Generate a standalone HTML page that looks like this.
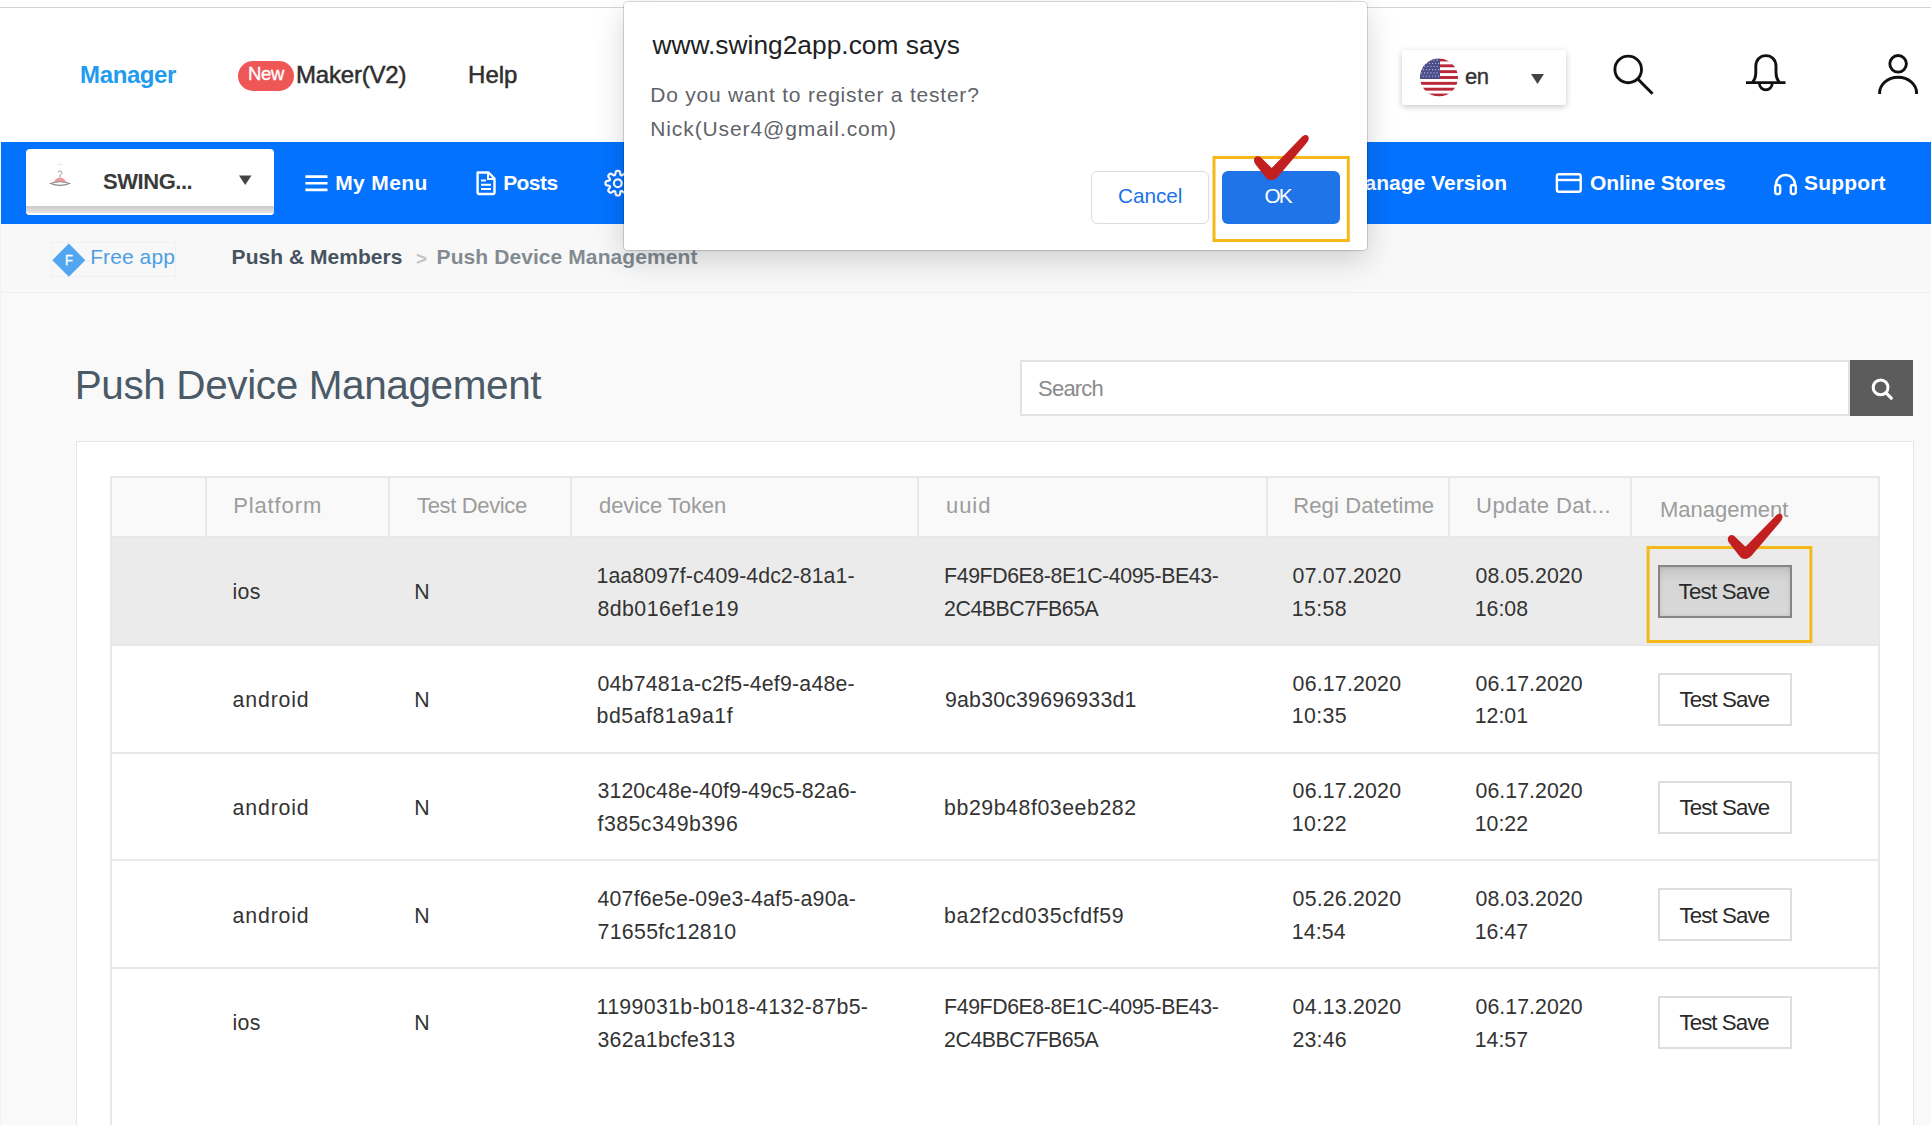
<!DOCTYPE html>
<html><head><meta charset="utf-8"><style>
html,body{margin:0;padding:0;width:1931px;height:1125px;overflow:hidden;background:#fff;position:relative}
.t{position:absolute;white-space:nowrap;line-height:1;font-family:"Liberation Sans",sans-serif}
.ov{position:absolute;left:0;top:0}
</style></head><body>
<div style="position:absolute;left:0px;top:7px;width:1931px;height:1px;background:#d4d4d4"></div>
<div style="position:absolute;left:0px;top:224px;width:1px;height:901px;background:#f3f3f3"></div>
<div class="t" id="t0" style="left:80.10px;top:62.50px;font-size:24px;font-weight:700;color:#1f9bf0;letter-spacing:-0.400px;">Manager</div>
<div style="position:absolute;left:238px;top:61px;width:56px;height:30px;background:#ef5757;border-radius:15px"></div>
<div class="t" id="t1" style="left:248.05px;top:65.05px;font-size:18.5px;font-weight:400;color:#fff;letter-spacing:-0.300px;-webkit-text-stroke:0.35px #fff">New</div>
<div class="t" id="t2" style="left:296.00px;top:62.50px;font-size:24px;font-weight:400;color:#2e2e2e;letter-spacing:-0.200px;-webkit-text-stroke:0.5px #2e2e2e">Maker(V2)</div>
<div class="t" id="t3" style="left:468.10px;top:62.50px;font-size:24px;font-weight:400;color:#2e2e2e;-webkit-text-stroke:0.5px #2e2e2e">Help</div>
<div style="position:absolute;left:1402px;top:50px;width:164px;height:55px;background:#fff;border-radius:3px;box-shadow:0 2px 6px rgba(0,0,0,0.22)"></div>
<div class="t" id="t4" style="left:1465.10px;top:65.50px;font-size:22px;font-weight:400;color:#333;letter-spacing:-0.500px;-webkit-text-stroke:0.4px #333">en</div>
<div style="position:absolute;left:1px;top:142px;width:1930px;height:82px;background:#0372fe"></div>
<div style="position:absolute;left:26px;top:149px;width:248px;height:66px;background:#fff;border-radius:4px;overflow:hidden"></div>
<div style="position:absolute;left:26px;top:206px;width:248px;height:9px;background:linear-gradient(#cbcbcb,#e4e4e4 78%,#fff 79%);border-radius:0 0 4px 4px"></div>
<div class="t" id="t5" style="left:103.10px;top:170.50px;font-size:22px;font-weight:700;color:#3a3a3a;letter-spacing:-0.472px;">SWING...</div>
<div class="t" id="t6" style="left:335.20px;top:172.00px;font-size:21px;font-weight:700;color:#fff;letter-spacing:0.375px;">My Menu</div>
<div class="t" id="t7" style="left:503.20px;top:172.00px;font-size:21px;font-weight:700;color:#fff;letter-spacing:-0.575px;">Posts</div>
<div class="t" id="t8" style="left:1307.00px;top:172.00px;font-size:21px;font-weight:700;color:#fff;width:200px;text-align:right">Manage Version</div>
<div class="t" id="t9" style="left:1590.10px;top:172.00px;font-size:21px;font-weight:700;color:#fff;letter-spacing:-0.075px;">Online Stores</div>
<div class="t" id="t10" style="left:1804.10px;top:172.00px;font-size:21px;font-weight:700;color:#fff;letter-spacing:0.150px;">Support</div>
<div style="position:absolute;left:1px;top:224px;width:1930px;height:68px;background:#f8f8f8;border-bottom:1px solid #f0f0f0"></div>
<div style="position:absolute;left:51px;top:241.5px;width:125px;height:35.5px;border:1px solid #f1f1f1;box-sizing:border-box"></div>
<div class="t" id="t11" style="left:90.15px;top:245.70px;font-size:21px;font-weight:400;color:#4d9fe2;letter-spacing:0.093px;">Free app</div>
<div class="t" id="t12" style="left:231.60px;top:246.20px;font-size:21px;font-weight:700;color:#46535f;letter-spacing:0.039px;">Push &amp; Members</div>
<div class="t" id="t13" style="left:416.00px;top:248.50px;font-size:19px;font-weight:700;color:#c2c2c2;letter-spacing:5.850px;">&gt;</div>
<div class="t" id="t14" style="left:436.55px;top:246.20px;font-size:21px;font-weight:700;color:#838b91;letter-spacing:0.085px;">Push Device Management</div>
<div style="position:absolute;left:1px;top:293px;width:1930px;height:832px;background:#f9f9f9"></div>
<div class="t" id="t15" style="left:74.75px;top:364.75px;font-size:40.5px;font-weight:400;color:#4b5a67;letter-spacing:-0.392px;">Push Device Management</div>
<div style="position:absolute;left:1020px;top:359.5px;width:830px;height:56px;background:#fff;border:2px solid #dfe3e6;box-sizing:border-box"></div>
<div class="t" id="t16" style="left:1038.10px;top:377.50px;font-size:22px;font-weight:400;color:#8a8a8a;letter-spacing:-0.800px;">Search</div>
<div style="position:absolute;left:1850px;top:359.5px;width:63px;height:56px;background:#5c5c5c"></div>
<div style="position:absolute;left:76px;top:441px;width:1838px;height:700px;background:#fff;border:1px solid #e6e6e6;box-sizing:border-box"></div>
<div style="position:absolute;left:110px;top:475.5px;width:1770px;height:700px;border:2px solid #e8e8e8;box-sizing:border-box;background:#fff"></div>
<div style="position:absolute;left:112px;top:477.5px;width:1766px;height:59.5px;background:#f9f9f9"></div>
<div style="position:absolute;left:112px;top:536px;width:1766px;height:2px;background:#e8e8e8"></div>
<div style="position:absolute;left:204.5px;top:477.5px;width:2px;height:59px;background:#e9e9e9"></div>
<div style="position:absolute;left:387.5px;top:477.5px;width:2px;height:59px;background:#e9e9e9"></div>
<div style="position:absolute;left:569.5px;top:477.5px;width:2px;height:59px;background:#e9e9e9"></div>
<div style="position:absolute;left:917px;top:477.5px;width:2px;height:59px;background:#e9e9e9"></div>
<div style="position:absolute;left:1265.5px;top:477.5px;width:2px;height:59px;background:#e9e9e9"></div>
<div style="position:absolute;left:1447.5px;top:477.5px;width:2px;height:59px;background:#e9e9e9"></div>
<div style="position:absolute;left:1629.5px;top:477.5px;width:2px;height:59px;background:#e9e9e9"></div>
<div class="t" id="t17" style="left:233.20px;top:495.00px;font-size:22px;font-weight:400;color:#9c9c9c;letter-spacing:0.879px;">Platform</div>
<div class="t" id="t18" style="left:417.00px;top:495.00px;font-size:22px;font-weight:400;color:#9c9c9c;letter-spacing:-0.350px;">Test Device</div>
<div class="t" id="t19" style="left:599.05px;top:495.00px;font-size:22px;font-weight:400;color:#9c9c9c;letter-spacing:-0.076px;">device Token</div>
<div class="t" id="t20" style="left:946.10px;top:495.00px;font-size:22px;font-weight:400;color:#9c9c9c;letter-spacing:0.900px;">uuid</div>
<div class="t" id="t21" style="left:1293.20px;top:495.00px;font-size:22px;font-weight:400;color:#9c9c9c;letter-spacing:0.125px;">Regi Datetime</div>
<div class="t" id="t22" style="left:1476.10px;top:495.00px;font-size:22px;font-weight:400;color:#9c9c9c;letter-spacing:0.400px;">Update Dat...</div>
<div class="t" id="t23" style="left:1660.00px;top:498.80px;font-size:22px;font-weight:400;color:#9c9c9c;">Management</div>
<div style="position:absolute;left:112px;top:538px;width:1766px;height:107px;background:#ebebeb"></div>
<div style="position:absolute;left:112px;top:644px;width:1766px;height:2px;background:#e8e8e8"></div>
<div class="t" id="t24" style="left:232.55px;top:582.35px;font-size:21.3px;font-weight:400;color:#333;letter-spacing:0.325px;">ios</div>
<div class="t" id="t25" style="left:414.15px;top:582.35px;font-size:21.3px;font-weight:400;color:#333;letter-spacing:9.000px;">N</div>
<div class="t" id="t26" style="left:596.60px;top:565.85px;font-size:21.3px;font-weight:400;color:#333;letter-spacing:0.041px;">1aa8097f-c409-4dc2-81a1-</div>
<div class="t" id="t27" style="left:597.50px;top:598.65px;font-size:21.3px;font-weight:400;color:#333;letter-spacing:0.439px;">8db016ef1e19</div>
<div class="t" id="t28" style="left:944.10px;top:565.85px;font-size:21.3px;font-weight:400;color:#333;letter-spacing:-0.411px;">F49FD6E8-8E1C-4095-BE43-</div>
<div class="t" id="t29" style="left:944.10px;top:598.65px;font-size:21.3px;font-weight:400;color:#333;letter-spacing:-0.471px;">2C4BBC7FB65A</div>
<div class="t" id="t30" style="left:1292.60px;top:565.85px;font-size:21.3px;font-weight:400;color:#333;letter-spacing:0.200px;">07.07.2020</div>
<div class="t" id="t31" style="left:1291.70px;top:598.65px;font-size:21.3px;font-weight:400;color:#333;letter-spacing:0.375px;">15:58</div>
<div class="t" id="t32" style="left:1475.55px;top:565.85px;font-size:21.3px;font-weight:400;color:#333;letter-spacing:0.050px;">08.05.2020</div>
<div class="t" id="t33" style="left:1474.65px;top:598.65px;font-size:21.3px;font-weight:400;color:#333;letter-spacing:0.038px;">16:08</div>
<div style="position:absolute;left:1658px;top:565.0px;width:134px;height:53px;background:linear-gradient(#c6c6c6,#d6d6d6 30%,#d8d8d8);border:2px solid #858585;box-sizing:border-box;box-shadow:inset 0 0 4px rgba(0,0,0,0.12)"></div>
<div class="t" id="t34" style="left:1678.60px;top:581.35px;font-size:22.3px;font-weight:400;color:#2a2a2a;letter-spacing:-0.798px;">Test Save</div>
<div style="position:absolute;left:112px;top:752px;width:1766px;height:2px;background:#e8e8e8"></div>
<div class="t" id="t35" style="left:232.55px;top:690.10px;font-size:21.3px;font-weight:400;color:#333;letter-spacing:0.850px;">android</div>
<div class="t" id="t36" style="left:414.15px;top:690.10px;font-size:21.3px;font-weight:400;color:#333;letter-spacing:8.100px;">N</div>
<div class="t" id="t37" style="left:597.50px;top:673.60px;font-size:21.3px;font-weight:400;color:#333;letter-spacing:0.216px;">04b7481a-c2f5-4ef9-a48e-</div>
<div class="t" id="t38" style="left:596.60px;top:706.40px;font-size:21.3px;font-weight:400;color:#333;letter-spacing:0.521px;">bd5af81a9a1f</div>
<div class="t" id="t39" style="left:945.00px;top:690.10px;font-size:21.3px;font-weight:400;color:#333;letter-spacing:0.200px;">9ab30c39696933d1</div>
<div class="t" id="t40" style="left:1292.60px;top:673.60px;font-size:21.3px;font-weight:400;color:#333;letter-spacing:0.200px;">06.17.2020</div>
<div class="t" id="t41" style="left:1291.70px;top:706.40px;font-size:21.3px;font-weight:400;color:#333;letter-spacing:0.375px;">10:35</div>
<div class="t" id="t42" style="left:1475.55px;top:673.60px;font-size:21.3px;font-weight:400;color:#333;letter-spacing:0.050px;">06.17.2020</div>
<div class="t" id="t43" style="left:1474.65px;top:706.40px;font-size:21.3px;font-weight:400;color:#333;letter-spacing:0.038px;">12:01</div>
<div style="position:absolute;left:1658px;top:672.75px;width:134px;height:53px;background:#fff;border:2px solid #dedede;box-sizing:border-box"></div>
<div class="t" id="t44" style="left:1679.50px;top:689.10px;font-size:22.3px;font-weight:400;color:#2a2a2a;letter-spacing:-0.911px;">Test Save</div>
<div style="position:absolute;left:112px;top:859px;width:1766px;height:2px;background:#e8e8e8"></div>
<div class="t" id="t45" style="left:232.55px;top:797.85px;font-size:21.3px;font-weight:400;color:#333;letter-spacing:0.850px;">android</div>
<div class="t" id="t46" style="left:414.15px;top:797.85px;font-size:21.3px;font-weight:400;color:#333;letter-spacing:8.100px;">N</div>
<div class="t" id="t47" style="left:597.50px;top:781.35px;font-size:21.3px;font-weight:400;color:#333;letter-spacing:0.099px;">3120c48e-40f9-49c5-82a6-</div>
<div class="t" id="t48" style="left:597.50px;top:814.15px;font-size:21.3px;font-weight:400;color:#333;letter-spacing:0.480px;">f385c349b396</div>
<div class="t" id="t49" style="left:944.10px;top:797.85px;font-size:21.3px;font-weight:400;color:#333;letter-spacing:0.560px;">bb29b48f03eeb282</div>
<div class="t" id="t50" style="left:1292.60px;top:781.35px;font-size:21.3px;font-weight:400;color:#333;letter-spacing:0.200px;">06.17.2020</div>
<div class="t" id="t51" style="left:1291.70px;top:814.15px;font-size:21.3px;font-weight:400;color:#333;letter-spacing:0.375px;">10:22</div>
<div class="t" id="t52" style="left:1475.55px;top:781.35px;font-size:21.3px;font-weight:400;color:#333;letter-spacing:0.050px;">06.17.2020</div>
<div class="t" id="t53" style="left:1474.65px;top:814.15px;font-size:21.3px;font-weight:400;color:#333;letter-spacing:0.038px;">10:22</div>
<div style="position:absolute;left:1658px;top:780.5px;width:134px;height:53px;background:#fff;border:2px solid #dedede;box-sizing:border-box"></div>
<div class="t" id="t54" style="left:1679.50px;top:796.85px;font-size:22.3px;font-weight:400;color:#2a2a2a;letter-spacing:-0.911px;">Test Save</div>
<div style="position:absolute;left:112px;top:967px;width:1766px;height:2px;background:#e8e8e8"></div>
<div class="t" id="t55" style="left:232.55px;top:905.60px;font-size:21.3px;font-weight:400;color:#333;letter-spacing:0.850px;">android</div>
<div class="t" id="t56" style="left:414.15px;top:905.60px;font-size:21.3px;font-weight:400;color:#333;letter-spacing:8.100px;">N</div>
<div class="t" id="t57" style="left:597.50px;top:889.10px;font-size:21.3px;font-weight:400;color:#333;letter-spacing:0.216px;">407f6e5e-09e3-4af5-a90a-</div>
<div class="t" id="t58" style="left:597.50px;top:921.90px;font-size:21.3px;font-weight:400;color:#333;letter-spacing:0.318px;">71655fc12810</div>
<div class="t" id="t59" style="left:944.10px;top:905.60px;font-size:21.3px;font-weight:400;color:#333;letter-spacing:0.680px;">ba2f2cd035cfdf59</div>
<div class="t" id="t60" style="left:1292.60px;top:889.10px;font-size:21.3px;font-weight:400;color:#333;letter-spacing:0.200px;">05.26.2020</div>
<div class="t" id="t61" style="left:1291.70px;top:921.90px;font-size:21.3px;font-weight:400;color:#333;letter-spacing:0.150px;">14:54</div>
<div class="t" id="t62" style="left:1475.55px;top:889.10px;font-size:21.3px;font-weight:400;color:#333;letter-spacing:0.050px;">08.03.2020</div>
<div class="t" id="t63" style="left:1474.65px;top:921.90px;font-size:21.3px;font-weight:400;color:#333;letter-spacing:0.038px;">16:47</div>
<div style="position:absolute;left:1658px;top:888.25px;width:134px;height:53px;background:#fff;border:2px solid #dedede;box-sizing:border-box"></div>
<div class="t" id="t64" style="left:1679.50px;top:904.60px;font-size:22.3px;font-weight:400;color:#2a2a2a;letter-spacing:-0.911px;">Test Save</div>
<div class="t" id="t65" style="left:232.55px;top:1013.35px;font-size:21.3px;font-weight:400;color:#333;letter-spacing:0.325px;">ios</div>
<div class="t" id="t66" style="left:414.15px;top:1013.35px;font-size:21.3px;font-weight:400;color:#333;letter-spacing:8.100px;">N</div>
<div class="t" id="t67" style="left:596.60px;top:996.85px;font-size:21.3px;font-weight:400;color:#333;letter-spacing:0.332px;">1199031b-b018-4132-87b5-</div>
<div class="t" id="t68" style="left:597.50px;top:1029.65px;font-size:21.3px;font-weight:400;color:#333;letter-spacing:0.237px;">362a1bcfe313</div>
<div class="t" id="t69" style="left:944.10px;top:996.85px;font-size:21.3px;font-weight:400;color:#333;letter-spacing:-0.411px;">F49FD6E8-8E1C-4095-BE43-</div>
<div class="t" id="t70" style="left:944.10px;top:1029.65px;font-size:21.3px;font-weight:400;color:#333;letter-spacing:-0.471px;">2C4BBC7FB65A</div>
<div class="t" id="t71" style="left:1292.60px;top:996.85px;font-size:21.3px;font-weight:400;color:#333;letter-spacing:0.200px;">04.13.2020</div>
<div class="t" id="t72" style="left:1292.60px;top:1029.65px;font-size:21.3px;font-weight:400;color:#333;letter-spacing:0.150px;">23:46</div>
<div class="t" id="t73" style="left:1475.55px;top:996.85px;font-size:21.3px;font-weight:400;color:#333;letter-spacing:0.050px;">06.17.2020</div>
<div class="t" id="t74" style="left:1474.65px;top:1029.65px;font-size:21.3px;font-weight:400;color:#333;letter-spacing:0.038px;">14:57</div>
<div style="position:absolute;left:1658px;top:996.0px;width:134px;height:53px;background:#fff;border:2px solid #dedede;box-sizing:border-box"></div>
<div class="t" id="t75" style="left:1679.50px;top:1012.35px;font-size:22.3px;font-weight:400;color:#2a2a2a;letter-spacing:-0.956px;">Test Save</div>
<svg class="ov" width="1931" height="1125" viewBox="0 0 1931 1125">
<clipPath id="fc"><circle cx="1439" cy="77.5" r="19"/></clipPath><g clip-path="url(#fc)"><rect x="1420" y="58.5" width="38" height="38" fill="#fff"/><rect x="1420" y="58.50" width="38" height="2.92" fill="#b8283a"/><rect x="1420" y="64.35" width="38" height="2.92" fill="#b8283a"/><rect x="1420" y="70.19" width="38" height="2.92" fill="#b8283a"/><rect x="1420" y="76.04" width="38" height="2.92" fill="#b8283a"/><rect x="1420" y="81.88" width="38" height="2.92" fill="#b8283a"/><rect x="1420" y="87.73" width="38" height="2.92" fill="#b8283a"/><rect x="1420" y="93.58" width="38" height="2.92" fill="#b8283a"/><rect x="1420" y="58.5" width="20" height="20.46" fill="#4a4f8c"/><circle cx="1421.60" cy="60.10" r="0.6" fill="#c9cbe0"/><circle cx="1424.70" cy="60.10" r="0.6" fill="#c9cbe0"/><circle cx="1427.80" cy="60.10" r="0.6" fill="#c9cbe0"/><circle cx="1430.90" cy="60.10" r="0.6" fill="#c9cbe0"/><circle cx="1434.00" cy="60.10" r="0.6" fill="#c9cbe0"/><circle cx="1437.10" cy="60.10" r="0.6" fill="#c9cbe0"/><circle cx="1423.15" cy="63.30" r="0.6" fill="#c9cbe0"/><circle cx="1426.25" cy="63.30" r="0.6" fill="#c9cbe0"/><circle cx="1429.35" cy="63.30" r="0.6" fill="#c9cbe0"/><circle cx="1432.45" cy="63.30" r="0.6" fill="#c9cbe0"/><circle cx="1435.55" cy="63.30" r="0.6" fill="#c9cbe0"/><circle cx="1438.65" cy="63.30" r="0.6" fill="#c9cbe0"/><circle cx="1421.60" cy="66.50" r="0.6" fill="#c9cbe0"/><circle cx="1424.70" cy="66.50" r="0.6" fill="#c9cbe0"/><circle cx="1427.80" cy="66.50" r="0.6" fill="#c9cbe0"/><circle cx="1430.90" cy="66.50" r="0.6" fill="#c9cbe0"/><circle cx="1434.00" cy="66.50" r="0.6" fill="#c9cbe0"/><circle cx="1437.10" cy="66.50" r="0.6" fill="#c9cbe0"/><circle cx="1423.15" cy="69.70" r="0.6" fill="#c9cbe0"/><circle cx="1426.25" cy="69.70" r="0.6" fill="#c9cbe0"/><circle cx="1429.35" cy="69.70" r="0.6" fill="#c9cbe0"/><circle cx="1432.45" cy="69.70" r="0.6" fill="#c9cbe0"/><circle cx="1435.55" cy="69.70" r="0.6" fill="#c9cbe0"/><circle cx="1438.65" cy="69.70" r="0.6" fill="#c9cbe0"/><circle cx="1421.60" cy="72.90" r="0.6" fill="#c9cbe0"/><circle cx="1424.70" cy="72.90" r="0.6" fill="#c9cbe0"/><circle cx="1427.80" cy="72.90" r="0.6" fill="#c9cbe0"/><circle cx="1430.90" cy="72.90" r="0.6" fill="#c9cbe0"/><circle cx="1434.00" cy="72.90" r="0.6" fill="#c9cbe0"/><circle cx="1437.10" cy="72.90" r="0.6" fill="#c9cbe0"/><circle cx="1423.15" cy="76.10" r="0.6" fill="#c9cbe0"/><circle cx="1426.25" cy="76.10" r="0.6" fill="#c9cbe0"/><circle cx="1429.35" cy="76.10" r="0.6" fill="#c9cbe0"/><circle cx="1432.45" cy="76.10" r="0.6" fill="#c9cbe0"/><circle cx="1435.55" cy="76.10" r="0.6" fill="#c9cbe0"/><circle cx="1438.65" cy="76.10" r="0.6" fill="#c9cbe0"/></g>
<path d="M1531,74 L1544,74 L1537.5,84 Z" fill="#444"/>
<!-- search -->
<circle cx="1628.2" cy="69.4" r="13.3" fill="none" stroke="#111" stroke-width="2.9"/>
<path d="M1637.8,79 L1652.5,93.7" stroke="#111" stroke-width="3"/>
<!-- bell -->
<path d="M1752.3,82.3 C1754.8,79.8 1755.8,77 1755.8,72.5 L1755.8,66.5 C1755.8,59.8 1760.2,55.6 1765.9,55.6 C1771.6,55.6 1776,59.8 1776,66.5 L1776,72.5 C1776,77 1777,79.8 1779.5,82.3" fill="none" stroke="#111" stroke-width="2.9"/>
<path d="M1746,82.6 L1785.5,82.6" stroke="#111" stroke-width="2.9"/>
<path d="M1759.4,83.5 A6.4,6.4 0 0 0 1772.2,83.5" fill="none" stroke="#111" stroke-width="2.8"/>
<!-- user -->
<circle cx="1898.1" cy="63.8" r="8.3" fill="none" stroke="#111" stroke-width="2.9"/>
<path d="M1879.6,94 L1879.6,93 A18.5,15.8 0 0 1 1916.6,93 L1916.6,94" fill="none" stroke="#111" stroke-width="2.9"/>
<!-- app select -->
<path d="M239,175.5 L251.5,175.5 L245.2,185 Z" fill="#444"/>
<path d="M57.5,164.3 H62" stroke="#ddd" stroke-width="0.8"/>
<path d="M60,177.2 V175.6 C60,174.6 62,174.2 62,172.9 C62,171.7 61.1,171 60,171 C58.9,171 58.1,171.7 58.1,172.6" fill="none" stroke="#888" stroke-width="0.9"/>
<path d="M53.8,182 C55.5,178.5 58,177.4 60,177.4 C62,177.4 64.5,178.5 66.4,182 Z" fill="#e99b9b"/>
<path d="M50.5,183.6 Q60,179.8 69.6,183.6 Q60,187.2 50.5,183.6 Z" fill="none" stroke="#8a8a8a" stroke-width="1.1"/>
<!-- hamburger -->
<g stroke="#fff" stroke-width="2.6">
<path d="M305.4,176.6 H327.5 M305.4,183.2 H327.5 M305.4,189.9 H327.5"/>
</g>
<!-- doc -->
<path d="M477.6,172.5 H488.5 L494.5,178.5 V192.8 Q494.5,194 493.3,194 H478.8 Q477.6,194 477.6,192.8 Z" fill="none" stroke="#fff" stroke-width="2.4" stroke-linejoin="round"/>
<path d="M488,172.8 V179 H494.2" fill="none" stroke="#fff" stroke-width="2"/>
<path d="M481,180.5 H486 M481,184.8 H491 M481,189 H491" stroke="#fff" stroke-width="2"/>
<!-- gear -->
<path d="M625.72,186.48 L625.70,186.51 L625.69,186.55 L625.68,186.59 L625.67,186.62 L625.66,186.66 L625.65,186.70 L625.64,186.73 L625.64,186.77 L625.63,186.81 L625.63,186.85 L625.63,186.89 L625.62,186.93 L625.63,186.97 L625.63,187.02 L625.63,187.06 L625.64,187.11 L625.65,187.16 L625.66,187.20 L625.67,187.25 L625.69,187.31 L625.71,187.36 L625.73,187.42 L625.76,187.47 L625.78,187.54 L625.82,187.60 L625.85,187.66 L625.89,187.73 L625.94,187.80 L625.99,187.88 L626.04,187.96 L626.09,188.04 L626.15,188.12 L626.21,188.21 L626.28,188.29 L626.35,188.39 L626.42,188.48 L626.49,188.58 L626.56,188.67 L626.63,188.77 L626.70,188.87 L626.77,188.97 L626.84,189.07 L626.90,189.17 L626.96,189.26 L627.02,189.36 L627.07,189.45 L627.12,189.55 L627.17,189.64 L627.21,189.72 L627.24,189.81 L627.27,189.89 L627.29,189.97 L627.31,190.05 L627.33,190.12 L627.34,190.20 L627.35,190.27 L627.35,190.33 L627.35,190.40 L627.35,190.46 L627.34,190.52 L627.33,190.58 L627.32,190.64 L627.31,190.70 L627.29,190.75 L627.27,190.80 L627.26,190.86 L627.23,190.91 L627.21,190.96 L627.19,191.01 L627.16,191.05 L627.13,191.10 L627.11,191.15 L627.08,191.19 L627.05,191.24 L627.02,191.28 L626.99,191.33 L626.96,191.37 L626.92,191.41 L626.89,191.46 L626.86,191.50 L626.82,191.54 L626.79,191.58 L626.75,191.62 L626.72,191.66 L626.68,191.70 L626.65,191.74 L626.61,191.78 L626.57,191.82 L626.54,191.86 L626.50,191.90 L626.46,191.94 L626.42,191.97 L626.38,192.01 L626.34,192.05 L626.30,192.08 L626.26,192.12 L626.22,192.15 L626.18,192.19 L626.14,192.22 L626.10,192.26 L626.06,192.29 L626.01,192.32 L625.97,192.36 L625.93,192.39 L625.88,192.42 L625.84,192.45 L625.79,192.48 L625.75,192.51 L625.70,192.53 L625.65,192.56 L625.61,192.59 L625.56,192.61 L625.51,192.63 L625.46,192.66 L625.40,192.67 L625.35,192.69 L625.30,192.71 L625.24,192.72 L625.18,192.73 L625.12,192.74 L625.06,192.75 L625.00,192.75 L624.93,192.75 L624.87,192.75 L624.80,192.74 L624.72,192.73 L624.65,192.71 L624.57,192.69 L624.49,192.67 L624.41,192.64 L624.32,192.61 L624.24,192.57 L624.15,192.52 L624.05,192.47 L623.96,192.42 L623.86,192.36 L623.77,192.30 L623.67,192.24 L623.57,192.17 L623.47,192.10 L623.37,192.03 L623.27,191.96 L623.18,191.89 L623.08,191.82 L622.99,191.75 L622.89,191.68 L622.81,191.61 L622.72,191.55 L622.64,191.49 L622.56,191.44 L622.48,191.39 L622.40,191.34 L622.33,191.29 L622.26,191.25 L622.20,191.22 L622.14,191.18 L622.07,191.16 L622.02,191.13 L621.96,191.11 L621.91,191.09 L621.85,191.07 L621.80,191.06 L621.76,191.05 L621.71,191.04 L621.66,191.03 L621.62,191.03 L621.57,191.03 L621.53,191.02 L621.49,191.03 L621.45,191.03 L621.41,191.03 L621.37,191.04 L621.33,191.04 L621.30,191.05 L621.26,191.06 L621.22,191.07 L621.19,191.08 L621.15,191.09 L621.11,191.10 L621.08,191.12 L621.05,191.13 L621.01,191.15 L620.98,191.17 L620.94,191.18 L620.91,191.20 L620.88,191.22 L620.85,191.24 L620.82,191.27 L620.78,191.29 L620.75,191.32 L620.72,191.34 L620.69,191.37 L620.66,191.40 L620.64,191.43 L620.61,191.47 L620.58,191.51 L620.55,191.55 L620.53,191.59 L620.50,191.63 L620.47,191.68 L620.45,191.73 L620.43,191.79 L620.40,191.85 L620.38,191.91 L620.36,191.98 L620.34,192.05 L620.32,192.13 L620.30,192.21 L620.28,192.30 L620.26,192.39 L620.24,192.48 L620.23,192.58 L620.21,192.69 L620.19,192.80 L620.18,192.91 L620.16,193.03 L620.14,193.14 L620.12,193.26 L620.10,193.38 L620.08,193.50 L620.06,193.62 L620.04,193.74 L620.02,193.85 L619.99,193.97 L619.96,194.08 L619.93,194.18 L619.90,194.28 L619.87,194.37 L619.84,194.46 L619.80,194.55 L619.76,194.63 L619.72,194.70 L619.68,194.77 L619.64,194.84 L619.60,194.89 L619.56,194.95 L619.51,195.00 L619.46,195.05 L619.42,195.09 L619.37,195.13 L619.32,195.16 L619.27,195.19 L619.22,195.22 L619.17,195.25 L619.12,195.28 L619.07,195.30 L619.02,195.32 L618.97,195.34 L618.92,195.36 L618.87,195.37 L618.81,195.39 L618.76,195.40 L618.71,195.41 L618.65,195.42 L618.60,195.43 L618.55,195.44 L618.50,195.45 L618.44,195.46 L618.39,195.47 L618.34,195.47 L618.28,195.48 L618.23,195.48 L618.18,195.49 L618.12,195.49 L618.07,195.49 L618.01,195.50 L617.96,195.50 L617.91,195.50 L617.85,195.50 L617.80,195.50 L617.75,195.50 L617.69,195.50 L617.64,195.50 L617.59,195.50 L617.53,195.49 L617.48,195.49 L617.42,195.49 L617.37,195.48 L617.32,195.48 L617.26,195.47 L617.21,195.47 L617.16,195.46 L617.10,195.45 L617.05,195.44 L617.00,195.43 L616.95,195.42 L616.89,195.41 L616.84,195.40 L616.79,195.39 L616.73,195.37 L616.68,195.36 L616.63,195.34 L616.58,195.32 L616.53,195.30 L616.48,195.28 L616.43,195.25 L616.38,195.22 L616.33,195.19 L616.28,195.16 L616.23,195.13 L616.18,195.09 L616.14,195.05 L616.09,195.00 L616.04,194.95 L616.00,194.89 L615.96,194.84 L615.92,194.77 L615.88,194.70 L615.84,194.63 L615.80,194.55 L615.76,194.46 L615.73,194.37 L615.70,194.28 L615.67,194.18 L615.64,194.08 L615.61,193.97 L615.58,193.85 L615.56,193.74 L615.54,193.62 L615.52,193.50 L615.50,193.38 L615.48,193.26 L615.46,193.14 L615.44,193.03 L615.42,192.91 L615.41,192.80 L615.39,192.69 L615.37,192.58 L615.36,192.48 L615.34,192.39 L615.32,192.30 L615.30,192.21 L615.28,192.13 L615.26,192.05 L615.24,191.98 L615.22,191.91 L615.20,191.85 L615.17,191.79 L615.15,191.73 L615.13,191.68 L615.10,191.63 L615.07,191.59 L615.05,191.55 L615.02,191.51 L614.99,191.47 L614.96,191.43 L614.94,191.40 L614.91,191.37 L614.88,191.34 L614.85,191.32 L614.82,191.29 L614.78,191.27 L614.75,191.24 L614.72,191.22 L614.69,191.20 L614.66,191.18 L614.62,191.17 L614.59,191.15 L614.55,191.13 L614.52,191.12 L614.49,191.10 L614.45,191.09 L614.41,191.08 L614.38,191.07 L614.34,191.06 L614.30,191.05 L614.27,191.04 L614.23,191.04 L614.19,191.03 L614.15,191.03 L614.11,191.03 L614.07,191.02 L614.03,191.03 L613.98,191.03 L613.94,191.03 L613.89,191.04 L613.84,191.05 L613.80,191.06 L613.75,191.07 L613.69,191.09 L613.64,191.11 L613.58,191.13 L613.53,191.16 L613.46,191.18 L613.40,191.22 L613.34,191.25 L613.27,191.29 L613.20,191.34 L613.12,191.39 L613.04,191.44 L612.96,191.49 L612.88,191.55 L612.79,191.61 L612.71,191.68 L612.61,191.75 L612.52,191.82 L612.42,191.89 L612.33,191.96 L612.23,192.03 L612.13,192.10 L612.03,192.17 L611.93,192.24 L611.83,192.30 L611.74,192.36 L611.64,192.42 L611.55,192.47 L611.45,192.52 L611.36,192.57 L611.28,192.61 L611.19,192.64 L611.11,192.67 L611.03,192.69 L610.95,192.71 L610.88,192.73 L610.80,192.74 L610.73,192.75 L610.67,192.75 L610.60,192.75 L610.54,192.75 L610.48,192.74 L610.42,192.73 L610.36,192.72 L610.30,192.71 L610.25,192.69 L610.20,192.67 L610.14,192.66 L610.09,192.63 L610.04,192.61 L609.99,192.59 L609.95,192.56 L609.90,192.53 L609.85,192.51 L609.81,192.48 L609.76,192.45 L609.72,192.42 L609.67,192.39 L609.63,192.36 L609.59,192.32 L609.54,192.29 L609.50,192.26 L609.46,192.22 L609.42,192.19 L609.38,192.15 L609.34,192.12 L609.30,192.08 L609.26,192.05 L609.22,192.01 L609.18,191.97 L609.14,191.94 L609.10,191.90 L609.06,191.86 L609.03,191.82 L608.99,191.78 L608.95,191.74 L608.92,191.70 L608.88,191.66 L608.85,191.62 L608.81,191.58 L608.78,191.54 L608.74,191.50 L608.71,191.46 L608.68,191.41 L608.64,191.37 L608.61,191.33 L608.58,191.28 L608.55,191.24 L608.52,191.19 L608.49,191.15 L608.47,191.10 L608.44,191.05 L608.41,191.01 L608.39,190.96 L608.37,190.91 L608.34,190.86 L608.33,190.80 L608.31,190.75 L608.29,190.70 L608.28,190.64 L608.27,190.58 L608.26,190.52 L608.25,190.46 L608.25,190.40 L608.25,190.33 L608.25,190.27 L608.26,190.20 L608.27,190.12 L608.29,190.05 L608.31,189.97 L608.33,189.89 L608.36,189.81 L608.39,189.72 L608.43,189.64 L608.48,189.55 L608.53,189.45 L608.58,189.36 L608.64,189.26 L608.70,189.17 L608.76,189.07 L608.83,188.97 L608.90,188.87 L608.97,188.77 L609.04,188.67 L609.11,188.58 L609.18,188.48 L609.25,188.39 L609.32,188.29 L609.39,188.21 L609.45,188.12 L609.51,188.04 L609.56,187.96 L609.61,187.88 L609.66,187.80 L609.71,187.73 L609.75,187.66 L609.78,187.60 L609.82,187.54 L609.84,187.47 L609.87,187.42 L609.89,187.36 L609.91,187.31 L609.93,187.25 L609.94,187.20 L609.95,187.16 L609.96,187.11 L609.97,187.06 L609.97,187.02 L609.97,186.97 L609.98,186.93 L609.97,186.89 L609.97,186.85 L609.97,186.81 L609.96,186.77 L609.96,186.73 L609.95,186.70 L609.94,186.66 L609.93,186.62 L609.92,186.59 L609.91,186.55 L609.90,186.51 L609.88,186.48 L609.87,186.45 L609.85,186.41 L609.83,186.38 L609.82,186.34 L609.80,186.31 L609.78,186.28 L609.76,186.25 L609.73,186.22 L609.71,186.18 L609.68,186.15 L609.66,186.12 L609.63,186.09 L609.60,186.06 L609.57,186.04 L609.53,186.01 L609.49,185.98 L609.45,185.95 L609.41,185.93 L609.37,185.90 L609.32,185.87 L609.27,185.85 L609.21,185.83 L609.15,185.80 L609.09,185.78 L609.02,185.76 L608.95,185.74 L608.87,185.72 L608.79,185.70 L608.70,185.68 L608.61,185.66 L608.52,185.64 L608.42,185.63 L608.31,185.61 L608.20,185.59 L608.09,185.58 L607.97,185.56 L607.86,185.54 L607.74,185.52 L607.62,185.50 L607.50,185.48 L607.38,185.46 L607.26,185.44 L607.15,185.42 L607.03,185.39 L606.92,185.36 L606.82,185.33 L606.72,185.30 L606.63,185.27 L606.54,185.24 L606.45,185.20 L606.37,185.16 L606.30,185.12 L606.23,185.08 L606.16,185.04 L606.11,185.00 L606.05,184.96 L606.00,184.91 L605.95,184.86 L605.91,184.82 L605.87,184.77 L605.84,184.72 L605.81,184.67 L605.78,184.62 L605.75,184.57 L605.72,184.52 L605.70,184.47 L605.68,184.42 L605.66,184.37 L605.64,184.32 L605.63,184.27 L605.61,184.21 L605.60,184.16 L605.59,184.11 L605.58,184.05 L605.57,184.00 L605.56,183.95 L605.55,183.90 L605.54,183.84 L605.53,183.79 L605.53,183.74 L605.52,183.68 L605.52,183.63 L605.51,183.58 L605.51,183.52 L605.51,183.47 L605.50,183.41 L605.50,183.36 L605.50,183.31 L605.50,183.25 L605.50,183.20 L605.50,183.15 L605.50,183.09 L605.50,183.04 L605.50,182.99 L605.51,182.93 L605.51,182.88 L605.51,182.82 L605.52,182.77 L605.52,182.72 L605.53,182.66 L605.53,182.61 L605.54,182.56 L605.55,182.50 L605.56,182.45 L605.57,182.40 L605.58,182.35 L605.59,182.29 L605.60,182.24 L605.61,182.19 L605.63,182.13 L605.64,182.08 L605.66,182.03 L605.68,181.98 L605.70,181.93 L605.72,181.88 L605.75,181.83 L605.78,181.78 L605.81,181.73 L605.84,181.68 L605.87,181.63 L605.91,181.58 L605.95,181.54 L606.00,181.49 L606.05,181.44 L606.11,181.40 L606.16,181.36 L606.23,181.32 L606.30,181.28 L606.37,181.24 L606.45,181.20 L606.54,181.16 L606.63,181.13 L606.72,181.10 L606.82,181.07 L606.92,181.04 L607.03,181.01 L607.15,180.98 L607.26,180.96 L607.38,180.94 L607.50,180.92 L607.62,180.90 L607.74,180.88 L607.86,180.86 L607.97,180.84 L608.09,180.82 L608.20,180.81 L608.31,180.79 L608.42,180.77 L608.52,180.76 L608.61,180.74 L608.70,180.72 L608.79,180.70 L608.87,180.68 L608.95,180.66 L609.02,180.64 L609.09,180.62 L609.15,180.60 L609.21,180.57 L609.27,180.55 L609.32,180.53 L609.37,180.50 L609.41,180.47 L609.45,180.45 L609.49,180.42 L609.53,180.39 L609.57,180.36 L609.60,180.34 L609.63,180.31 L609.66,180.28 L609.68,180.25 L609.71,180.22 L609.73,180.18 L609.76,180.15 L609.78,180.12 L609.80,180.09 L609.82,180.06 L609.83,180.02 L609.85,179.99 L609.87,179.95 L609.88,179.92 L609.90,179.89 L609.91,179.85 L609.92,179.81 L609.93,179.78 L609.94,179.74 L609.95,179.70 L609.96,179.67 L609.96,179.63 L609.97,179.59 L609.97,179.55 L609.97,179.51 L609.98,179.47 L609.97,179.43 L609.97,179.38 L609.97,179.34 L609.96,179.29 L609.95,179.24 L609.94,179.20 L609.93,179.15 L609.91,179.09 L609.89,179.04 L609.87,178.98 L609.84,178.93 L609.82,178.86 L609.78,178.80 L609.75,178.74 L609.71,178.67 L609.66,178.60 L609.61,178.52 L609.56,178.44 L609.51,178.36 L609.45,178.28 L609.39,178.19 L609.32,178.11 L609.25,178.01 L609.18,177.92 L609.11,177.82 L609.04,177.73 L608.97,177.63 L608.90,177.53 L608.83,177.43 L608.76,177.33 L608.70,177.23 L608.64,177.14 L608.58,177.04 L608.53,176.95 L608.48,176.85 L608.43,176.76 L608.39,176.68 L608.36,176.59 L608.33,176.51 L608.31,176.43 L608.29,176.35 L608.27,176.28 L608.26,176.20 L608.25,176.13 L608.25,176.07 L608.25,176.00 L608.25,175.94 L608.26,175.88 L608.27,175.82 L608.28,175.76 L608.29,175.70 L608.31,175.65 L608.33,175.60 L608.34,175.54 L608.37,175.49 L608.39,175.44 L608.41,175.39 L608.44,175.35 L608.47,175.30 L608.49,175.25 L608.52,175.21 L608.55,175.16 L608.58,175.12 L608.61,175.07 L608.64,175.03 L608.68,174.99 L608.71,174.94 L608.74,174.90 L608.78,174.86 L608.81,174.82 L608.85,174.78 L608.88,174.74 L608.92,174.70 L608.95,174.66 L608.99,174.62 L609.03,174.58 L609.06,174.54 L609.10,174.50 L609.14,174.46 L609.18,174.43 L609.22,174.39 L609.26,174.35 L609.30,174.32 L609.34,174.28 L609.38,174.25 L609.42,174.21 L609.46,174.18 L609.50,174.14 L609.54,174.11 L609.59,174.08 L609.63,174.04 L609.67,174.01 L609.72,173.98 L609.76,173.95 L609.81,173.92 L609.85,173.89 L609.90,173.87 L609.95,173.84 L609.99,173.81 L610.04,173.79 L610.09,173.77 L610.14,173.74 L610.20,173.73 L610.25,173.71 L610.30,173.69 L610.36,173.68 L610.42,173.67 L610.48,173.66 L610.54,173.65 L610.60,173.65 L610.67,173.65 L610.73,173.65 L610.80,173.66 L610.88,173.67 L610.95,173.69 L611.03,173.71 L611.11,173.73 L611.19,173.76 L611.28,173.79 L611.36,173.83 L611.45,173.88 L611.55,173.93 L611.64,173.98 L611.74,174.04 L611.83,174.10 L611.93,174.16 L612.03,174.23 L612.13,174.30 L612.23,174.37 L612.33,174.44 L612.42,174.51 L612.52,174.58 L612.61,174.65 L612.71,174.72 L612.79,174.79 L612.88,174.85 L612.96,174.91 L613.04,174.96 L613.12,175.01 L613.20,175.06 L613.27,175.11 L613.34,175.15 L613.40,175.18 L613.46,175.22 L613.53,175.24 L613.58,175.27 L613.64,175.29 L613.69,175.31 L613.75,175.33 L613.80,175.34 L613.84,175.35 L613.89,175.36 L613.94,175.37 L613.98,175.37 L614.03,175.37 L614.07,175.38 L614.11,175.37 L614.15,175.37 L614.19,175.37 L614.23,175.36 L614.27,175.36 L614.30,175.35 L614.34,175.34 L614.38,175.33 L614.41,175.32 L614.45,175.31 L614.49,175.30 L614.52,175.28 L614.55,175.27 L614.59,175.25 L614.62,175.23 L614.66,175.22 L614.69,175.20 L614.72,175.18 L614.75,175.16 L614.78,175.13 L614.82,175.11 L614.85,175.08 L614.88,175.06 L614.91,175.03 L614.94,175.00 L614.96,174.97 L614.99,174.93 L615.02,174.89 L615.05,174.85 L615.07,174.81 L615.10,174.77 L615.13,174.72 L615.15,174.67 L615.17,174.61 L615.20,174.55 L615.22,174.49 L615.24,174.42 L615.26,174.35 L615.28,174.27 L615.30,174.19 L615.32,174.10 L615.34,174.01 L615.36,173.92 L615.37,173.82 L615.39,173.71 L615.41,173.60 L615.42,173.49 L615.44,173.37 L615.46,173.26 L615.48,173.14 L615.50,173.02 L615.52,172.90 L615.54,172.78 L615.56,172.66 L615.58,172.55 L615.61,172.43 L615.64,172.32 L615.67,172.22 L615.70,172.12 L615.73,172.03 L615.76,171.94 L615.80,171.85 L615.84,171.77 L615.88,171.70 L615.92,171.63 L615.96,171.56 L616.00,171.51 L616.04,171.45 L616.09,171.40 L616.14,171.35 L616.18,171.31 L616.23,171.27 L616.28,171.24 L616.33,171.21 L616.38,171.18 L616.43,171.15 L616.48,171.12 L616.53,171.10 L616.58,171.08 L616.63,171.06 L616.68,171.04 L616.73,171.03 L616.79,171.01 L616.84,171.00 L616.89,170.99 L616.95,170.98 L617.00,170.97 L617.05,170.96 L617.10,170.95 L617.16,170.94 L617.21,170.93 L617.26,170.93 L617.32,170.92 L617.37,170.92 L617.42,170.91 L617.48,170.91 L617.53,170.91 L617.59,170.90 L617.64,170.90 L617.69,170.90 L617.75,170.90 L617.80,170.90 L617.85,170.90 L617.91,170.90 L617.96,170.90 L618.01,170.90 L618.07,170.91 L618.12,170.91 L618.18,170.91 L618.23,170.92 L618.28,170.92 L618.34,170.93 L618.39,170.93 L618.44,170.94 L618.50,170.95 L618.55,170.96 L618.60,170.97 L618.65,170.98 L618.71,170.99 L618.76,171.00 L618.81,171.01 L618.87,171.03 L618.92,171.04 L618.97,171.06 L619.02,171.08 L619.07,171.10 L619.12,171.12 L619.17,171.15 L619.22,171.18 L619.27,171.21 L619.32,171.24 L619.37,171.27 L619.42,171.31 L619.46,171.35 L619.51,171.40 L619.56,171.45 L619.60,171.51 L619.64,171.56 L619.68,171.63 L619.72,171.70 L619.76,171.77 L619.80,171.85 L619.84,171.94 L619.87,172.03 L619.90,172.12 L619.93,172.22 L619.96,172.32 L619.99,172.43 L620.02,172.55 L620.04,172.66 L620.06,172.78 L620.08,172.90 L620.10,173.02 L620.12,173.14 L620.14,173.26 L620.16,173.37 L620.18,173.49 L620.19,173.60 L620.21,173.71 L620.23,173.82 L620.24,173.92 L620.26,174.01 L620.28,174.10 L620.30,174.19 L620.32,174.27 L620.34,174.35 L620.36,174.42 L620.38,174.49 L620.40,174.55 L620.43,174.61 L620.45,174.67 L620.47,174.72 L620.50,174.77 L620.53,174.81 L620.55,174.85 L620.58,174.89 L620.61,174.93 L620.64,174.97 L620.66,175.00 L620.69,175.03 L620.72,175.06 L620.75,175.08 L620.78,175.11 L620.82,175.13 L620.85,175.16 L620.88,175.18 L620.91,175.20 L620.94,175.22 L620.98,175.23 L621.01,175.25 L621.05,175.27 L621.08,175.28 L621.11,175.30 L621.15,175.31 L621.19,175.32 L621.22,175.33 L621.26,175.34 L621.30,175.35 L621.33,175.36 L621.37,175.36 L621.41,175.37 L621.45,175.37 L621.49,175.37 L621.53,175.38 L621.57,175.37 L621.62,175.37 L621.66,175.37 L621.71,175.36 L621.76,175.35 L621.80,175.34 L621.85,175.33 L621.91,175.31 L621.96,175.29 L622.02,175.27 L622.07,175.24 L622.14,175.22 L622.20,175.18 L622.26,175.15 L622.33,175.11 L622.40,175.06 L622.48,175.01 L622.56,174.96 L622.64,174.91 L622.72,174.85 L622.81,174.79 L622.89,174.72 L622.99,174.65 L623.08,174.58 L623.18,174.51 L623.27,174.44 L623.37,174.37 L623.47,174.30 L623.57,174.23 L623.67,174.16 L623.77,174.10 L623.86,174.04 L623.96,173.98 L624.05,173.93 L624.15,173.88 L624.24,173.83 L624.32,173.79 L624.41,173.76 L624.49,173.73 L624.57,173.71 L624.65,173.69 L624.72,173.67 L624.80,173.66 L624.87,173.65 L624.93,173.65 L625.00,173.65 L625.06,173.65 L625.12,173.66 L625.18,173.67 L625.24,173.68 L625.30,173.69 L625.35,173.71 L625.40,173.73 L625.46,173.74 L625.51,173.77 L625.56,173.79 L625.61,173.81 L625.65,173.84 L625.70,173.87 L625.75,173.89 L625.79,173.92 L625.84,173.95 L625.88,173.98 L625.93,174.01 L625.97,174.04 L626.01,174.08 L626.06,174.11 L626.10,174.14 L626.14,174.18 L626.18,174.21 L626.22,174.25 L626.26,174.28 L626.30,174.32 L626.34,174.35 L626.38,174.39 L626.42,174.43 L626.46,174.46 L626.50,174.50 L626.54,174.54 L626.57,174.58 L626.61,174.62 L626.65,174.66 L626.68,174.70 L626.72,174.74 L626.75,174.78 L626.79,174.82 L626.82,174.86 L626.86,174.90 L626.89,174.94 L626.92,174.99 L626.96,175.03 L626.99,175.07 L627.02,175.12 L627.05,175.16 L627.08,175.21 L627.11,175.25 L627.13,175.30 L627.16,175.35 L627.19,175.39 L627.21,175.44 L627.23,175.49 L627.26,175.54 L627.27,175.60 L627.29,175.65 L627.31,175.70 L627.32,175.76 L627.33,175.82 L627.34,175.88 L627.35,175.94 L627.35,176.00 L627.35,176.07 L627.35,176.13 L627.34,176.20 L627.33,176.28 L627.31,176.35 L627.29,176.43 L627.27,176.51 L627.24,176.59 L627.21,176.68 L627.17,176.76 L627.12,176.85 L627.07,176.95 L627.02,177.04 L626.96,177.14 L626.90,177.23 L626.84,177.33 L626.77,177.43 L626.70,177.53 L626.63,177.63 L626.56,177.73 L626.49,177.82 L626.42,177.92 L626.35,178.01 L626.28,178.11 L626.21,178.19 L626.15,178.28 L626.09,178.36 L626.04,178.44 L625.99,178.52 L625.94,178.60 L625.89,178.67 L625.85,178.74 L625.82,178.80 L625.78,178.86 L625.76,178.93 L625.73,178.98 L625.71,179.04 L625.69,179.09 L625.67,179.15 L625.66,179.20 L625.65,179.24 L625.64,179.29 L625.63,179.34 L625.63,179.38 L625.63,179.43 L625.62,179.47 L625.63,179.51 L625.63,179.55 L625.63,179.59 L625.64,179.63 L625.64,179.67 L625.65,179.70 L625.66,179.74 L625.67,179.78 L625.68,179.81 L625.69,179.85 L625.70,179.89 L625.72,179.92 L625.73,179.95 L625.75,179.99 L625.77,180.02 L625.78,180.06 L625.80,180.09 L625.82,180.12 L625.84,180.15 L625.87,180.18 L625.89,180.22 L625.92,180.25 L625.94,180.28 L625.97,180.31 L626.00,180.34 L626.03,180.36 L626.07,180.39 L626.11,180.42 L626.15,180.45 L626.19,180.47 L626.23,180.50 L626.28,180.53 L626.33,180.55 L626.39,180.57 L626.45,180.60 L626.51,180.62 L626.58,180.64 L626.65,180.66 L626.73,180.68 L626.81,180.70 L626.90,180.72 L626.99,180.74 L627.08,180.76 L627.18,180.77 L627.29,180.79 L627.40,180.81 L627.51,180.82 L627.63,180.84 L627.74,180.86 L627.86,180.88 L627.98,180.90 L628.10,180.92 L628.22,180.94 L628.34,180.96 L628.45,180.98 L628.57,181.01 L628.68,181.04 L628.78,181.07 L628.88,181.10 L628.97,181.13 L629.06,181.16 L629.15,181.20 L629.23,181.24 L629.30,181.28 L629.37,181.32 L629.44,181.36 L629.49,181.40 L629.55,181.44 L629.60,181.49 L629.65,181.54 L629.69,181.58 L629.73,181.63 L629.76,181.68 L629.79,181.73 L629.82,181.78 L629.85,181.83 L629.88,181.88 L629.90,181.93 L629.92,181.98 L629.94,182.03 L629.96,182.08 L629.97,182.13 L629.99,182.19 L630.00,182.24 L630.01,182.29 L630.02,182.35 L630.03,182.40 L630.04,182.45 L630.05,182.50 L630.06,182.56 L630.07,182.61 L630.07,182.66 L630.08,182.72 L630.08,182.77 L630.09,182.82 L630.09,182.88 L630.09,182.93 L630.10,182.99 L630.10,183.04 L630.10,183.09 L630.10,183.15 L630.10,183.20 L630.10,183.25 L630.10,183.31 L630.10,183.36 L630.10,183.41 L630.09,183.47 L630.09,183.52 L630.09,183.58 L630.08,183.63 L630.08,183.68 L630.07,183.74 L630.07,183.79 L630.06,183.84 L630.05,183.90 L630.04,183.95 L630.03,184.00 L630.02,184.05 L630.01,184.11 L630.00,184.16 L629.99,184.21 L629.97,184.27 L629.96,184.32 L629.94,184.37 L629.92,184.42 L629.90,184.47 L629.88,184.52 L629.85,184.57 L629.82,184.62 L629.79,184.67 L629.76,184.72 L629.73,184.77 L629.69,184.82 L629.65,184.86 L629.60,184.91 L629.55,184.96 L629.49,185.00 L629.44,185.04 L629.37,185.08 L629.30,185.12 L629.23,185.16 L629.15,185.20 L629.06,185.24 L628.97,185.27 L628.88,185.30 L628.78,185.33 L628.68,185.36 L628.57,185.39 L628.45,185.42 L628.34,185.44 L628.22,185.46 L628.10,185.48 L627.98,185.50 L627.86,185.52 L627.74,185.54 L627.63,185.56 L627.51,185.58 L627.40,185.59 L627.29,185.61 L627.18,185.63 L627.08,185.64 L626.99,185.66 L626.90,185.68 L626.81,185.70 L626.73,185.72 L626.65,185.74 L626.58,185.76 L626.51,185.78 L626.45,185.80 L626.39,185.83 L626.33,185.85 L626.28,185.87 L626.23,185.90 L626.19,185.93 L626.15,185.95 L626.11,185.98 L626.07,186.01 L626.03,186.04 L626.00,186.06 L625.97,186.09 L625.94,186.12 L625.92,186.15 L625.89,186.18 L625.87,186.22 L625.84,186.25 L625.82,186.28 L625.80,186.31 L625.78,186.34 L625.77,186.38 L625.75,186.41 L625.73,186.45 Z" fill="none" stroke="#fff" stroke-width="2.2" stroke-linejoin="round"/>
<circle cx="617.8" cy="183.2" r="3.9" fill="none" stroke="#fff" stroke-width="2.2"/>
<!-- card -->
<rect x="1556.9" y="174.2" width="23.8" height="17.6" rx="2" fill="none" stroke="#fff" stroke-width="2.4"/>
<path d="M1556.9,180 H1580.7" stroke="#fff" stroke-width="2.4"/>
<!-- headphones -->
<path d="M1776,186 V184.5 A9.5,9.5 0 0 1 1795,184.5 V186" fill="none" stroke="#fff" stroke-width="2.4"/>
<rect x="1775.2" y="185" width="5" height="9" rx="2" fill="none" stroke="#fff" stroke-width="2.3"/>
<rect x="1790.8" y="185" width="5" height="9" rx="2" fill="none" stroke="#fff" stroke-width="2.3"/>
<!-- breadcrumb diamond -->
<path d="M68.8,243.6 L85.3,260.2 L68.8,276.8 L52.3,260.2 Z" fill="#52a6f0"/>
<!-- search button icon -->
<circle cx="1880.6" cy="387.4" r="7.4" fill="none" stroke="#fff" stroke-width="3"/>
<path d="M1886,392.8 L1891.3,398.2" stroke="#fff" stroke-width="3.2" stroke-linecap="round"/>
</svg>
<div style="position:absolute;left:623.5px;top:1.5px;width:743px;height:248.5px;background:#fff;border-radius:4px;box-shadow:0 0 0 1px rgba(0,0,0,0.13),0 10px 30px rgba(0,0,0,0.17),0 1px 3px rgba(0,0,0,0.06)"></div>
<div style="position:absolute;left:1091px;top:171px;width:117.5px;height:52.5px;border:1px solid #dadce0;border-radius:6px;box-sizing:border-box;background:#fff"></div>
<div style="position:absolute;left:1222px;top:171px;width:118px;height:52.5px;border-radius:6px;background:#1f74e8"></div>
<div class="t" id="t76" style="left:652.40px;top:32.35px;font-size:26.3px;font-weight:400;color:#202124;letter-spacing:0.027px;">www.swing2app.com says</div>
<div class="t" id="t77" style="left:650.24px;top:84.30px;font-size:21px;font-weight:400;color:#5f6368;letter-spacing:0.784px;">Do you want to register a tester?</div>
<div class="t" id="t78" style="left:650.24px;top:117.80px;font-size:21px;font-weight:400;color:#5f6368;letter-spacing:0.896px;">Nick(User4@gmail.com)</div>
<div class="t" id="t79" style="left:1118.05px;top:186.10px;font-size:20.8px;font-weight:400;color:#1a73e8;letter-spacing:-0.100px;">Cancel</div>
<div class="t" id="t80" style="left:1264.60px;top:186.10px;font-size:20.8px;font-weight:400;color:#fff;letter-spacing:-1.900px;">OK</div>
<div class="t" id="t81" style="left:64.50px;top:252.45px;font-size:15.3px;font-weight:400;color:#fff;-webkit-text-stroke:0.4px #fff;transform:scaleX(0.84);transform-origin:0 0">F</div>
<svg class="ov" width="1931" height="1125" viewBox="0 0 1931 1125">
<rect x="1214" y="157.5" width="134.3" height="83" fill="none" stroke="#f4b81a" stroke-width="3"/>
<rect x="1648.1" y="547.5" width="162.8" height="94" fill="none" stroke="#f4b81a" stroke-width="3"/>
<path transform="translate(1271.7,180.4)" d="M-15.5,-23.8 C-13.8,-24.8 -11.8,-24 -10.2,-22.4 L0,-12.5 L30.5,-43.8 C33,-46.5 37.5,-46 37,-41.5 C36.8,-40.2 36.2,-39.2 35.3,-38 L6,-3.5 C3,0.2 -2.5,0.8 -5.5,-2.5 L-16.5,-16.5 C-18.5,-19.5 -18,-22.5 -15.5,-23.8 Z" fill="#c22020"/>
<path transform="translate(1745.5,559.3)" d="M-15.5,-23.8 C-13.8,-24.8 -11.8,-24 -10.2,-22.4 L0,-12.5 L30.5,-43.8 C33,-46.5 37.5,-46 37,-41.5 C36.8,-40.2 36.2,-39.2 35.3,-38 L6,-3.5 C3,0.2 -2.5,0.8 -5.5,-2.5 L-16.5,-16.5 C-18.5,-19.5 -18,-22.5 -15.5,-23.8 Z" fill="#c22020"/>
</svg>
</body></html>
